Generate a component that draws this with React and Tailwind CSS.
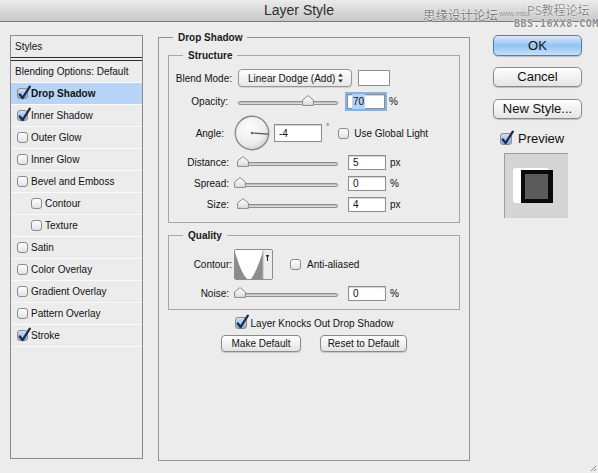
import React from 'react';

const styleItems = [
  { label: 'Drop Shadow', checked: true, active: true },
  { label: 'Inner Shadow', checked: true },
  { label: 'Outer Glow' },
  { label: 'Inner Glow' },
  { label: 'Bevel and Emboss' },
  { label: 'Contour', indent: true },
  { label: 'Texture', indent: true },
  { label: 'Satin' },
  { label: 'Color Overlay' },
  { label: 'Gradient Overlay' },
  { label: 'Pattern Overlay' },
  { label: 'Stroke', checked: true },
];

function Check({ checked, size = 'w-[11px] h-[11px]' }) {
  return (
    <span
      className={`relative inline-block shrink-0 ${size} rounded-[3px] border border-[#8b8b8b] ${
        checked
          ? 'bg-linear-to-b from-[#cfe0f5] to-[#86acdd]'
          : 'bg-linear-to-b from-white to-[#e2e2e2]'
      }`}
    >
      {checked && (
        <svg className="absolute left-[0px] top-[-4px]" width="13" height="15" viewBox="0 0 13 15">
          <path
            d="M1.8 9.5 L4.6 13 L11.8 1.6"
            stroke="#1b2b4c"
            strokeWidth="2.3"
            fill="none"
            strokeLinecap="round"
            strokeLinejoin="round"
          />
        </svg>
      )}
    </span>
  );
}

function Slider({ thumb, width = 100 }) {
  return (
    <div className="relative h-[12px] flex items-center" style={{ width }}>
      <div className="w-full h-[4px] mt-[3px] rounded-full border border-[#8f8f8f] bg-linear-to-b from-[#b4b4b4] to-[#e8e8e8]" />
      <svg className="absolute top-[0px]" style={{ left: thumb - 6 }} width="12" height="11" viewBox="0 0 12 11">
        <defs>
          <linearGradient id="thumbg" x1="0" y1="0" x2="0" y2="1">
            <stop offset="0" stopColor="#ffffff" />
            <stop offset="1" stopColor="#dcdcdc" />
          </linearGradient>
        </defs>
        <path d="M6 0.6 L11.4 5 L11.4 10.4 L0.6 10.4 L0.6 5 Z" fill="url(#thumbg)" stroke="#8a8a8a" strokeWidth="1" />
      </svg>
    </div>
  );
}

function Field({ value, w = 'w-[38px]', h = 'h-[15px]', focused }) {
  return (
    <div
      className={`${w} ${h} flex items-center bg-white border border-[#8d8d8d] pl-[4px] text-[10px] shadow-[inset_0_1px_1px_rgba(0,0,0,0.18)] ${
        focused ? 'outline-[2px] outline-solid outline-[#86b2e8]' : ''
      }`}
    >
      {focused ? <span className="bg-[#b4d2f7] px-[1px]">{value}</span> : value}
    </div>
  );
}

function Legend({ children }) {
  return (
    <legend className="ml-[14px] px-[5px] text-[10px] leading-[13px] font-bold text-[#1a1a1a]">
      {children}
    </legend>
  );
}

function Label({ w, children }) {
  return (
    <div className={`${w} shrink-0 text-right text-[10px]`}>{children}</div>
  );
}

function SmallButton({ children, w }) {
  return (
    <div
      className={`${w} h-[17px] flex items-center justify-center rounded-[4px] border border-[#8a8a8a] bg-linear-to-b from-white to-[#e3e3e3] shadow-[0_1px_1px_rgba(0,0,0,0.15)] text-[10px]`}
    >
      {children}
    </div>
  );
}

function SideButton({ children, primary, h = 'h-[20px]', className = '' }) {
  return (
    <div
      className={`w-[89px] ${h} flex items-center justify-center rounded-[5px] border text-[13px] shadow-[0_1px_1px_rgba(0,0,0,0.2)] ${
        primary
          ? 'border-[#5379ad] bg-linear-to-b from-[#d8eafd] via-[#94c3f1] to-[#c4e1fb]'
          : 'border-[#8b8b8b] bg-linear-to-b from-white to-[#e4e4e4]'
      } ${className}`}
    >
      {children}
    </div>
  );
}

function Dial() {
  return (
    <svg width="36" height="36" viewBox="0 0 36 36" className="shrink-0">
      <defs>
        <radialGradient id="dialg" cx="0.4" cy="0.35" r="0.7">
          <stop offset="0" stopColor="#fdfdfd" />
          <stop offset="0.7" stopColor="#ececec" />
          <stop offset="1" stopColor="#cfcfcf" />
        </radialGradient>
      </defs>
      <circle cx="18" cy="18" r="16.7" fill="url(#dialg)" stroke="#8a8a8a" strokeWidth="1.4" />
      <line x1="18" y1="18" x2="34.6" y2="19.1" stroke="#555" strokeWidth="1.1" />
      <circle cx="18" cy="18" r="1.2" fill="#666" />
    </svg>
  );
}

function ContourThumb() {
  return (
    <svg width="39" height="31" viewBox="0 0 39 31" className="shrink-0">
      <rect x="0.5" y="0.5" width="38" height="30" rx="1.5" fill="#fff" stroke="#8d8d8d" />
      <path d="M1 3 Q7 24 13 30 L1 30 Z" fill="#8c8c8c" />
      <path d="M29 2 Q23 22 17 30 L29 30 Z" fill="#8c8c8c" />
      <rect x="29" y="1" width="9" height="29" fill="#ececec" />
      <line x1="29" y1="1" x2="29" y2="30" stroke="#b5b5b5" />
      <path d="M31.8 6 L35.2 6 L33.5 9.5 Z" fill="#222" />
      <line x1="33.5" y1="8" x2="33.5" y2="12" stroke="#222" strokeWidth="1" />
    </svg>
  );
}

function TitleBar() {
  return (
    <div className="relative h-[22px] shrink-0 flex items-center justify-center border-b border-[#7b7b7b] bg-linear-to-b from-[#ebebeb] to-[#c8c8c8]">
      <span className="text-[14px] text-[#2e2e2e]">Layer Style</span>
      <div className="absolute left-[423px] top-[7px] text-[12.5px] leading-[15px] text-[#7a7a7a] font-['Noto_Sans_CJK_SC',sans-serif] [text-shadow:0_0_2px_#fff,0_0_1px_#fff]">
        思缘设计论坛
      </div>
      <div className="absolute left-[499px] top-[10px] text-[7px] leading-[7px] text-[#8a8a8a] [text-shadow:0_0_1px_#fff]">
        www.miss
      </div>
      <div className="absolute left-[527px] top-[3px] text-[12px] leading-[14px] text-[#8a8a8a] font-['Noto_Sans_CJK_SC',sans-serif] [text-shadow:0_0_2px_#fff,0_0_1px_#fff]">
        PS教程论坛
      </div>
      <div className="absolute left-[514px] top-[18px] text-[10px] leading-[11px] font-bold tracking-[0.5px] text-[#8a8a8a] font-['DejaVu_Sans_Mono',monospace] [text-shadow:0_0_2px_#fff,0_0_1px_#fff]">
        BBS.16XX8.COM
      </div>
    </div>
  );
}

function StylesList() {
  return (
    <div className="ml-[10px] mt-[13px] w-[133px] h-[424px] border border-[#8b8b8b] bg-[#ececec] text-[10px] shrink-0">
      <div className="h-[21px] flex items-center pl-[4px]">Styles</div>
      <div className="h-[4px] border-y border-[#2c2c2c]" />
      <div className="h-[22px] flex items-center pl-[4px] border-b border-[#fafafa]">
        Blending Options: Default
      </div>
      {styleItems.map((item) => (
        <div
          key={item.label}
          className={`h-[22px] flex items-center border-b border-[#fafafa] ${
            item.indent ? 'pl-[20px]' : 'pl-[6px]'
          } ${item.active ? 'bg-[#b7d4f7] font-bold' : ''}`}
        >
          <Check checked={item.checked} />
          <span className="ml-[3px]">{item.label}</span>
        </div>
      ))}
    </div>
  );
}

function MainPanel() {
  return (
    <fieldset className="ml-[15px] mt-[9px] w-[312px] h-[430px] border border-[#929292] shrink-0">
      <Legend>Drop Shadow</Legend>
      <div className="px-[9px]">
        <fieldset className="mt-[5px] border border-[#a6a6a6] pb-[10px]">
          <Legend>Structure</Legend>
          <div className="mt-[7px] h-[18px] flex items-center">
            <Label w="w-[63px]">Blend Mode:</Label>
            <div className="ml-[6px] w-[114px] h-[18px] flex items-center justify-between rounded-[4px] border border-[#979797] bg-linear-to-b from-white to-[#e6e6e6] shadow-[0_1px_1px_rgba(0,0,0,0.12)] pl-[9px] pr-[8px] text-[10px]">
              <span>Linear Dodge (Add)</span>
              <svg width="5" height="10" viewBox="0 0 5 10">
                <path d="M0 3.5 L2.5 0.5 L5 3.5 Z" fill="#333" />
                <path d="M0 6.5 L2.5 9.5 L5 6.5 Z" fill="#333" />
              </svg>
            </div>
            <div className="ml-[6px] w-[32px] h-[16px] bg-white border border-[#8f8f8f]" />
          </div>
          <div className="mt-[6px] h-[16px] flex items-center">
            <Label w="w-[59px]">Opacity:</Label>
            <div className="ml-[10px]">
              <Slider thumb={70} />
            </div>
            <div className="ml-[9px]">
              <Field value="70" focused />
            </div>
            <span className="ml-[4px] text-[10px]">%</span>
          </div>
          <div className="mt-[6px] h-[36px] flex items-center">
            <Label w="w-[55px]">Angle:</Label>
            <div className="ml-[10px] flex items-center">
              <Dial />
            </div>
            <div className="ml-[4px]">
              <Field value="-4" w="w-[48px]" h="h-[18px]" />
            </div>
            <span className="ml-[4px] self-start mt-[8px] text-[8px] leading-[8px]">°</span>
            <div className="ml-[9px] flex items-center">
              <Check />
              <span className="ml-[5px] text-[10px]">Use Global Light</span>
            </div>
          </div>
          {[
            { label: 'Distance:', value: '5', unit: 'px', thumb: 4, mt: 'mt-[3px]' },
            { label: 'Spread:', value: '0', unit: '%', thumb: 1, mt: 'mt-[5px]' },
            { label: 'Size:', value: '4', unit: 'px', thumb: 4, mt: 'mt-[5px]' },
          ].map((row) => (
            <div key={row.label} className={`${row.mt} h-[16px] flex items-center`}>
              <Label w="w-[60px]">{row.label}</Label>
              <div className="ml-[10px]">
                <Slider thumb={row.thumb} width={99} />
              </div>
              <div className="ml-[10px]">
                <Field value={row.value} />
              </div>
              <span className="ml-[4px] text-[10px]">{row.unit}</span>
            </div>
          ))}
        </fieldset>

        <fieldset className="mt-[6px] border border-[#a6a6a6] pb-[8px]">
          <Legend>Quality</Legend>
          <div className="mt-[7px] h-[31px] flex items-center">
            <Label w="w-[63px]">Contour:</Label>
            <div className="ml-[2px] flex">
              <ContourThumb />
            </div>
            <div className="ml-[17px] flex items-center">
              <Check />
              <span className="ml-[6px] text-[10px]">Anti-aliased</span>
            </div>
          </div>
          <div className="mt-[5px] h-[16px] flex items-center">
            <Label w="w-[60px]">Noise:</Label>
            <div className="ml-[10px]">
              <Slider thumb={1} width={99} />
            </div>
            <div className="ml-[10px]">
              <Field value="0" />
            </div>
            <span className="ml-[4px] text-[10px]">%</span>
          </div>
        </fieldset>

        <div className="mt-[6px] h-[14px] flex items-center justify-center text-[10px]">
          <Check checked size="w-[12px] h-[12px]" />
          <span className="ml-[4px]">Layer Knocks Out Drop Shadow</span>
        </div>
        <div className="mt-[5px] flex justify-center gap-[19px]">
          <SmallButton w="w-[80px]">Make Default</SmallButton>
          <SmallButton w="w-[87px]">Reset to Default</SmallButton>
        </div>
      </div>
    </fieldset>
  );
}

function SidePanel() {
  return (
    <div className="ml-[23px] mt-[13px] flex flex-col shrink-0">
      <SideButton primary h="h-[21px]">OK</SideButton>
      <SideButton className="mt-[11px]">Cancel</SideButton>
      <SideButton className="mt-[12px]">New Style...</SideButton>
      <div className="mt-[14px] ml-[7px] h-[12px] flex items-center">
        <Check checked size="w-[12px] h-[12px]" />
        <span className="ml-[6px] text-[13px]">Preview</span>
      </div>
      <div className="mt-[8px] ml-[11px] w-[64px] h-[65px] bg-[#d5d5d5] border-l border-t border-[#9e9e9e]">
        <svg width="63" height="64" viewBox="0 0 63 64">
          <rect x="8" y="14" width="36" height="35" rx="3" fill="#fff" />
          <rect x="16" y="16" width="32" height="33" fill="#0a0a0a" />
          <rect x="20" y="20" width="23" height="25" fill="#5b5b5b" />
        </svg>
      </div>
    </div>
  );
}

export default function App() {
  return (
    <div className="relative w-[598px] h-[473px] overflow-hidden bg-[#ececec] flex flex-col text-[#111] font-['Liberation_Sans',Arial,sans-serif]">
      <TitleBar />
      <div className="flex items-start flex-1">
        <StylesList />
        <MainPanel />
        <SidePanel />
      </div>
      <svg className="absolute right-[1px] bottom-[1px]" width="8" height="8" viewBox="0 0 8 8">
        <line x1="7" y1="2" x2="2" y2="7" stroke="#888" />
        <line x1="7" y1="5" x2="5" y2="7" stroke="#888" />
      </svg>
    </div>
  );
}
